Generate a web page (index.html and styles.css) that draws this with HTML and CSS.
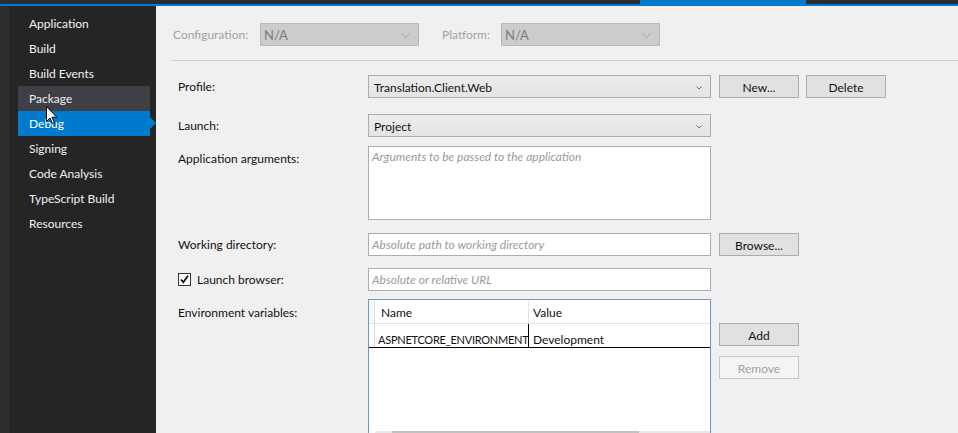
FILE: index.html
```html
<!DOCTYPE html>
<html>
<head>
<meta charset="utf-8">
<link rel="stylesheet" href="styles.css">
</head>
<body>
<div class="topband">
  <div class="tab-active"></div>
</div>
<div class="main">
  <div class="edge"></div>
  <nav class="sidebar">
    <div class="nav-item">Application</div>
    <div class="nav-item">Build</div>
    <div class="nav-item">Build Events</div>
    <div class="nav-item hover">Package<svg class="cursor" width="12" height="19" viewBox="0 0 12 19"><path d="M0.5 0.5 L0.5 15.5 L4 12 L6.5 17.5 L8.5 16.5 L6 11.2 L10.8 11.2 Z" fill="#fff" stroke="#000" stroke-width="1"/></svg></div>
    <div class="nav-item selected">Debug</div>
    <div class="nav-item">Signing</div>
    <div class="nav-item">Code Analysis</div>
    <div class="nav-item">TypeScript Build</div>
    <div class="nav-item">Resources</div>
  </nav>
  <section class="content">
    <div class="config-row">
      <span class="dim-label">Configuration:</span>
      <div class="select disabled w-config"><span>N/A</span><svg class="chev" width="9" height="5" viewBox="0 0 9 5"><path d="M0.5 0.5 L4.5 4.5 L8.5 0.5" fill="none" stroke="#a8a8a8"/></svg></div>
      <span class="dim-label plat">Platform:</span>
      <div class="select disabled w-config"><span>N/A</span><svg class="chev" width="9" height="5" viewBox="0 0 9 5"><path d="M0.5 0.5 L4.5 4.5 L8.5 0.5" fill="none" stroke="#a8a8a8"/></svg></div>
    </div>
    <div class="separator"></div>
    <div class="form">
      <div class="row r-profile">
        <div class="label">Profile:</div>
        <div class="select field"><span>Translation.Client.Web</span><svg class="chev sm" width="6" height="4" viewBox="0 0 6 4"><path d="M0.5 0.5 L3 3 L5.5 0.5" fill="none" stroke="#707070"/></svg></div>
        <button class="btn">New...</button>
        <button class="btn">Delete</button>
      </div>
      <div class="row r-launch">
        <div class="label">Launch:</div>
        <div class="select field"><span>Project</span><svg class="chev sm" width="6" height="4" viewBox="0 0 6 4"><path d="M0.5 0.5 L3 3 L5.5 0.5" fill="none" stroke="#707070"/></svg></div>
      </div>
      <div class="row r-args">
        <div class="label">Application arguments:</div>
        <div class="textbox field tall"><span class="ph">Arguments to be passed to the application</span></div>
      </div>
      <div class="row r-wd">
        <div class="label">Working directory:</div>
        <div class="textbox field"><span class="ph">Absolute path to working directory</span></div>
        <button class="btn">Browse...</button>
      </div>
      <div class="row r-lb">
        <div class="label check-label"><span class="checkbox"><svg width="11" height="11" viewBox="0 0 11 11"><path d="M2 5.5 L4.3 8.3 L9 1.8" fill="none" stroke="#111" stroke-width="1.8"/></svg></span>Launch browser:</div>
        <div class="textbox field"><span class="ph">Absolute or relative URL</span></div>
      </div>
      <div class="row r-env">
        <div class="label">Environment variables:</div>
        <div class="grid field">
          <div class="grid-head">
            <div class="rowhdr"></div>
            <div class="cell c-name">Name</div>
            <div class="cell c-value">Value</div>
          </div>
          <div class="grid-row">
            <div class="rowhdr"></div>
            <div class="cell c-name">ASPNETCORE_ENVIRONMENT</div>
            <div class="cell c-value">Development</div>
          </div>
          <div class="grid-fill"></div>
          <div class="hscroll"><div class="thumb"></div></div>
        </div>
        <div class="btn-col">
          <button class="btn">Add</button>
          <button class="btn off">Remove</button>
        </div>
      </div>
    </div>
  </section>
</div>
</body>
</html>
```

FILE: styles.css
```css
* { box-sizing: border-box; }
html, body { margin: 0; padding: 0; }
body {
  width: 958px;
  height: 433px;
  overflow: hidden;
  background: #f0f0f0;
  font-family: "Lato", "Noto Sans", sans-serif;
  font-size: 12px;
  color: #111;
}
.topband {
  height: 6px;
  background: #2d2d30;
  border-bottom: 2px solid #007acc;
  position: relative;
}
.tab-active {
  position: absolute;
  left: 640px;
  top: 0;
  width: 166px;
  height: 6px;
  background: #007acc;
}
.main {
  display: flex;
  height: 427px;
}
.edge {
  width: 9px;
  background: #2d2d30;
  flex: none;
}
.sidebar {
  width: 147px;
  flex: none;
  background: #252526;
  padding-top: 5px;
}
.nav-item {
  position: relative;
  height: 25px;
  line-height: 26px;
  margin-left: 9px;
  width: 132px;
  padding-left: 11px;
  color: #f1f1f1;
}
.nav-item.hover { background: #3f3f46; }
.nav-item.selected { background: #007acc; color: #fff; }
.nav-item.selected::after {
  content: "";
  position: absolute;
  right: -6px;
  top: 6px;
  border-left: 6px solid #007acc;
  border-top: 6px solid transparent;
  border-bottom: 6px solid transparent;
}
.cursor {
  position: absolute;
  left: 28px;
  top: 20px;
  z-index: 2;
}
.content {
  flex: 1;
  padding-top: 17px;
}
.config-row {
  display: flex;
  align-items: center;
  padding-left: 17px;
  height: 23px;
}
.dim-label { color: #a2a2a2; width: 87px; }
.dim-label.plat { width: 59px; margin-left: 23px; }
.select {
  position: relative;
  height: 23px;
  display: flex;
  align-items: center;
  padding-left: 5px;
  padding-top: 1px;
}
.select.disabled {
  background: #cccccc;
  border: 1px solid #bababa;
  color: #7d7d7d;
  font-size: 13px;
  padding-left: 3px;
}
.w-config { width: 159px; }
.chev { position: absolute; right: 8px; top: 9px; }
.chev.sm { right: 8px; top: 10px; }
.separator {
  height: 1px;
  background: #cfcfcf;
  margin: 14px 0 0 15px;
}
.form {
  padding-left: 22px;
  padding-top: 14px;
}
.row {
  display: flex;
  align-items: flex-start;
}
.label {
  width: 190px;
  flex: none;
  height: 23px;
  padding-top: 1px;
  line-height: 22px;
}
.field {
  width: 343px;
  flex: none;
}
.select.field {
  background: linear-gradient(#ececec, #e4e4e4);
  border: 1px solid #acacac;
  color: #111;
}
.textbox {
  height: 23px;
  background: #fff;
  border: 1px solid #abadb3;
  padding-left: 3px;
  line-height: 22px;
}
.textbox.tall { height: 74px; line-height: 18px; padding-top: 1px; }
.ph { color: #9a9a9a; font-style: italic; }
.btn {
  width: 80px;
  height: 23px;
  margin-left: 8px;
  flex: none;
  background: #e1e1e1;
  border: 1px solid #adadad;
  font-family: inherit;
  font-size: 12px;
  color: #111;
  padding: 1px 0 0;
}
.btn + .btn { margin-left: 7px; }
.btn.off {
  background: #f4f4f4;
  border-color: #c6c6c6;
  color: #a0a0a0;
}
.r-profile { margin-top: 0; }
.r-launch { margin-top: 16px; }
.r-args { margin-top: 9px; }
.r-args .label { line-height: 16px; padding-top: 5px; }
.r-wd { margin-top: 13px; }
.r-lb { margin-top: 12px; }
.r-env { margin-top: 8px; }
.r-env .label { line-height: 16px; padding-top: 6px; }
.check-label { display: flex; align-items: center; padding-top: 0; }
.checkbox {
  width: 13px;
  height: 13px;
  border: 1px solid #333;
  background: #fff;
  margin-right: 6px;
  display: flex;
  align-items: center;
  justify-content: center;
}
.grid {
  height: 150px;
  background: #fff;
  border: 1px solid #6f95c4;
  display: flex;
  flex-direction: column;
}
.grid-head, .grid-row { display: flex; height: 23px; flex: none; }
.grid-head { margin-top: 1px; height: 23px; border-bottom: 1px solid #e3e3e3; }
.rowhdr { width: 6px; flex: none; border-right: 1px solid #d8d8d8; background: #f7f7f7; }
.grid-row .rowhdr { background: #fff; }
.cell { line-height: 24px; padding-left: 4px; white-space: nowrap; }
.grid-row { height: 24px; border-bottom: 1px solid #000; }
.grid-row .cell { line-height: 31px; }
.c-name { width: 154px; border-right: 1px solid #e3e3e3; padding-left: 5px; }
.grid-head .c-name { padding-left: 6px; }
.c-value { flex: 1; }
.grid-row .c-name { border-right: 1px solid #000; padding-left: 3px; font-size: 11px; letter-spacing: -0.25px; }
.grid-fill { flex: 1; }
.hscroll {
  height: 17px;
  margin-left: 6px;
  background: #e8e8e8;
  flex: none;
  padding-left: 17px;
}
.thumb { width: 247px; height: 100%; background: #c2c2c2; }
.btn-col { display: flex; flex-direction: column; padding-top: 24px; }
.btn-col .btn + .btn { margin-left: 8px; margin-top: 10px; }
```
